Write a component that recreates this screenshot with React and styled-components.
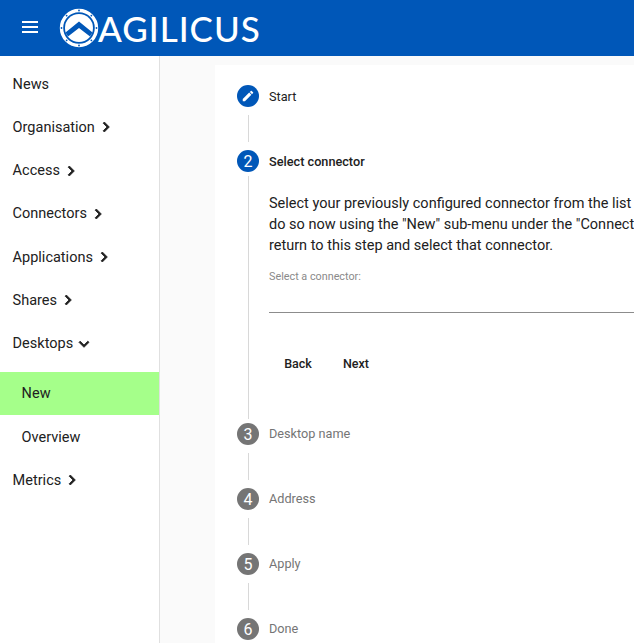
import React from "react";
import styled, { createGlobalStyle } from "styled-components";

const GlobalStyle = createGlobalStyle`
  html, body {
    margin: 0;
    height: 100%;
    overflow: hidden;
    font-family: Roboto, "Liberation Sans", sans-serif;
    background: #fff;
  }
`;

const Shell = styled.div`
  display: flex;
  flex-direction: column;
  height: 100vh;
  overflow: hidden;
`;

const Toolbar = styled.header`
  display: flex;
  align-items: center;
  flex: 0 0 56px;
  padding-left: 20px;
  background: #0057b8;
  color: #fff;
`;

const MenuButton = styled.svg`
  width: 20px;
  height: 20px;
  margin: -2px 18px 0 0;
  fill: #fff;
`;

const Logo = styled.svg`
  width: 42px;
  height: 42px;
  flex: none;
  margin-right: -2px;
`;

const Wordmark = styled.span`
  font-family: Lato, "Open Sans", sans-serif;
  font-size: 35px;
  font-weight: 500;
  line-height: 1;
  letter-spacing: 1px;
`;

const Body = styled.div`
  display: flex;
  flex: 1;
  min-height: 0;
`;

const Sidebar = styled.nav`
  flex: 0 0 159px;
  padding-top: 6.6px;
  border-right: 1px solid #e0e0e0;
  background: #fff;
`;

const NavItem = styled.div`
  display: flex;
  align-items: center;
  height: ${({ $active }) => ($active ? "42.75px" : "43.25px")};
  margin-top: ${({ $active }) => ($active ? "7px" : "0")};
  margin-bottom: ${({ $active }) => ($active ? "0.5px" : "0")};
  padding-left: ${({ $sub }) => ($sub ? "21.6px" : "12.6px")};
  background: ${({ $active }) => ($active ? "#a5ff8a" : "transparent")};
  color: #212121;
  font-size: 14.5px;
`;

const Chevron = styled.svg`
  width: 20px;
  height: 20px;
  margin-left: 1px;
  fill: #212121;
  stroke: #212121;
  stroke-width: 1;
`;

const Content = styled.main`
  flex: 1;
  min-width: 0;
  padding: 9px 0 0 55px;
  background: #fafafa;
  overflow: hidden;
`;

const Card = styled.section`
  width: 640px;
  height: 100%;
  padding: 20px 0 0 22px;
  background: #fff;
`;

const StepHeader = styled.div`
  display: flex;
  align-items: center;
  gap: 10px;
  height: 22px;
`;

const Bubble = styled.span`
  display: flex;
  align-items: center;
  justify-content: center;
  flex: none;
  width: 22px;
  height: 22px;
  border-radius: 50%;
  background: ${({ $on }) => ($on ? "#0057b8" : "#757575")};
  color: #fff;
  font-size: 16px;
`;

const StepLabel = styled.span`
  position: relative;
  top: ${({ $muted }) => ($muted ? "-1px" : "0")};
  font-size: 12.7px;
  font-weight: ${({ $current }) => ($current ? 500 : 400)};
  color: ${({ $muted }) => ($muted ? "#757575" : "#212121")};
`;

const StepBody = styled.div`
  margin-left: 10.5px;
  padding-left: 20.5px;
  border-left: 1px solid #d8d8d8;
  min-height: ${({ $h }) => $h}px;
  margin-top: ${({ $gap }) => $gap ?? 8}px;
  margin-bottom: ${({ $gap }) => $gap ?? 8}px;
`;

const Description = styled.p`
  margin: 0;
  padding-top: 17px;
  font-size: 14.5px;
  line-height: 21px;
  color: #212121;
  white-space: nowrap;
`;

const FieldLabel = styled.div`
  margin-top: 15px;
  font-size: 10.8px;
  line-height: 12px;
  color: #8a8a8a;
`;

const FieldLine = styled.div`
  height: 29px;
  border-bottom: 1px solid #8c8c8c;
`;

const Actions = styled.div`
  display: flex;
  margin-top: 32px;
`;

const Action = styled.button`
  min-width: 58px;
  height: 36px;
  padding: 0 15px;
  border: 0;
  background: none;
  color: #212121;
  font: 500 12.5px Roboto, sans-serif;
`;

const ChevronRight = () => (
  <Chevron viewBox="0 0 24 24">
    <path d="M10 6 8.59 7.41 13.17 12l-4.58 4.59L10 18l6-6z" />
  </Chevron>
);

const ChevronDown = () => (
  <Chevron viewBox="0 0 24 24">
    <path d="M16.59 8.59 12 13.17 7.41 8.59 6 10l6 6 6-6z" />
  </Chevron>
);

const navItems = [
  { label: "News" },
  { label: "Organisation", icon: "right" },
  { label: "Access", icon: "right" },
  { label: "Connectors", icon: "right" },
  { label: "Applications", icon: "right" },
  { label: "Shares", icon: "right" },
  { label: "Desktops", icon: "down" },
  { label: "New", sub: true, active: true },
  { label: "Overview", sub: true },
  { label: "Metrics", icon: "right" },
];

const laterSteps = [
  { n: 3, label: "Desktop name" },
  { n: 4, label: "Address" },
  { n: 5, label: "Apply" },
  { n: 6, label: "Done" },
];

const logoDots = [0, 45, 90, 135, 180, 225, 270, 315];

function App() {
  return (
    <Shell>
      <GlobalStyle />
      <Toolbar>
        <MenuButton viewBox="0 0 20 20">
          <rect x="2" y="4" width="16" height="2" />
          <rect x="2" y="9" width="16" height="2" />
          <rect x="2" y="14" width="16" height="2" />
        </MenuButton>
        <Logo viewBox="0 0 42 42">
          <circle cx="21" cy="21" r="17.5" fill="none" stroke="#fff" strokeWidth="3.4" />
          <circle cx="21" cy="21" r="14" fill="#fff" />
          <path d="M7.5 25.5 21 14.5 34.5 25.5 32 29.5 21 21 10 29.5z" fill="#0057b8" />
          {logoDots.map((deg) => (
            <circle key={deg} cx="21" cy="3.5" r="0.9" fill="#0057b8" transform={`rotate(${deg} 21 21)`} />
          ))}
        </Logo>
        <Wordmark>AGILICUS</Wordmark>
      </Toolbar>
      <Body>
        <Sidebar>
          {navItems.map((item) => (
            <NavItem key={item.label} $sub={item.sub} $active={item.active}>
              {item.label}
              {item.icon === "right" && <ChevronRight />}
              {item.icon === "down" && <ChevronDown />}
            </NavItem>
          ))}
        </Sidebar>
        <Content>
          <Card>
            <StepHeader>
              <Bubble $on>
                <svg width="14" height="14" viewBox="0 0 24 24" fill="#fff">
                  <path d="M3 17.25V21h3.75L17.81 9.94l-3.75-3.75L3 17.25zM20.71 7.04a1 1 0 0 0 0-1.41l-2.34-2.34a1 1 0 0 0-1.41 0l-1.83 1.83 3.75 3.75 1.83-1.83z" />
                </svg>
              </Bubble>
              <StepLabel>Start</StepLabel>
            </StepHeader>
            <StepBody $h={27} />
            <StepHeader>
              <Bubble $on>2</Bubble>
              <StepLabel $current>Select connector</StepLabel>
            </StepHeader>
            <StepBody $h={243} $gap={4}>
              <Description>
                Select your previously configured connector from the list
                <br />
                do so now using the "New" sub-menu under the "Connectors" menu, then
                <br />
                return to this step and select that connector.
              </Description>
              <FieldLabel>Select a connector:</FieldLabel>
              <FieldLine />
              <Actions>
                <Action>Back</Action>
                <Action>Next</Action>
              </Actions>
            </StepBody>
            {laterSteps.map((step, i) => (
              <React.Fragment key={step.n}>
                <StepHeader>
                  <Bubble>{step.n}</Bubble>
                  <StepLabel $muted>{step.label}</StepLabel>
                </StepHeader>
                {i < laterSteps.length - 1 && <StepBody $h={27} />}
              </React.Fragment>
            ))}
          </Card>
        </Content>
      </Body>
    </Shell>
  );
}

export default App;
